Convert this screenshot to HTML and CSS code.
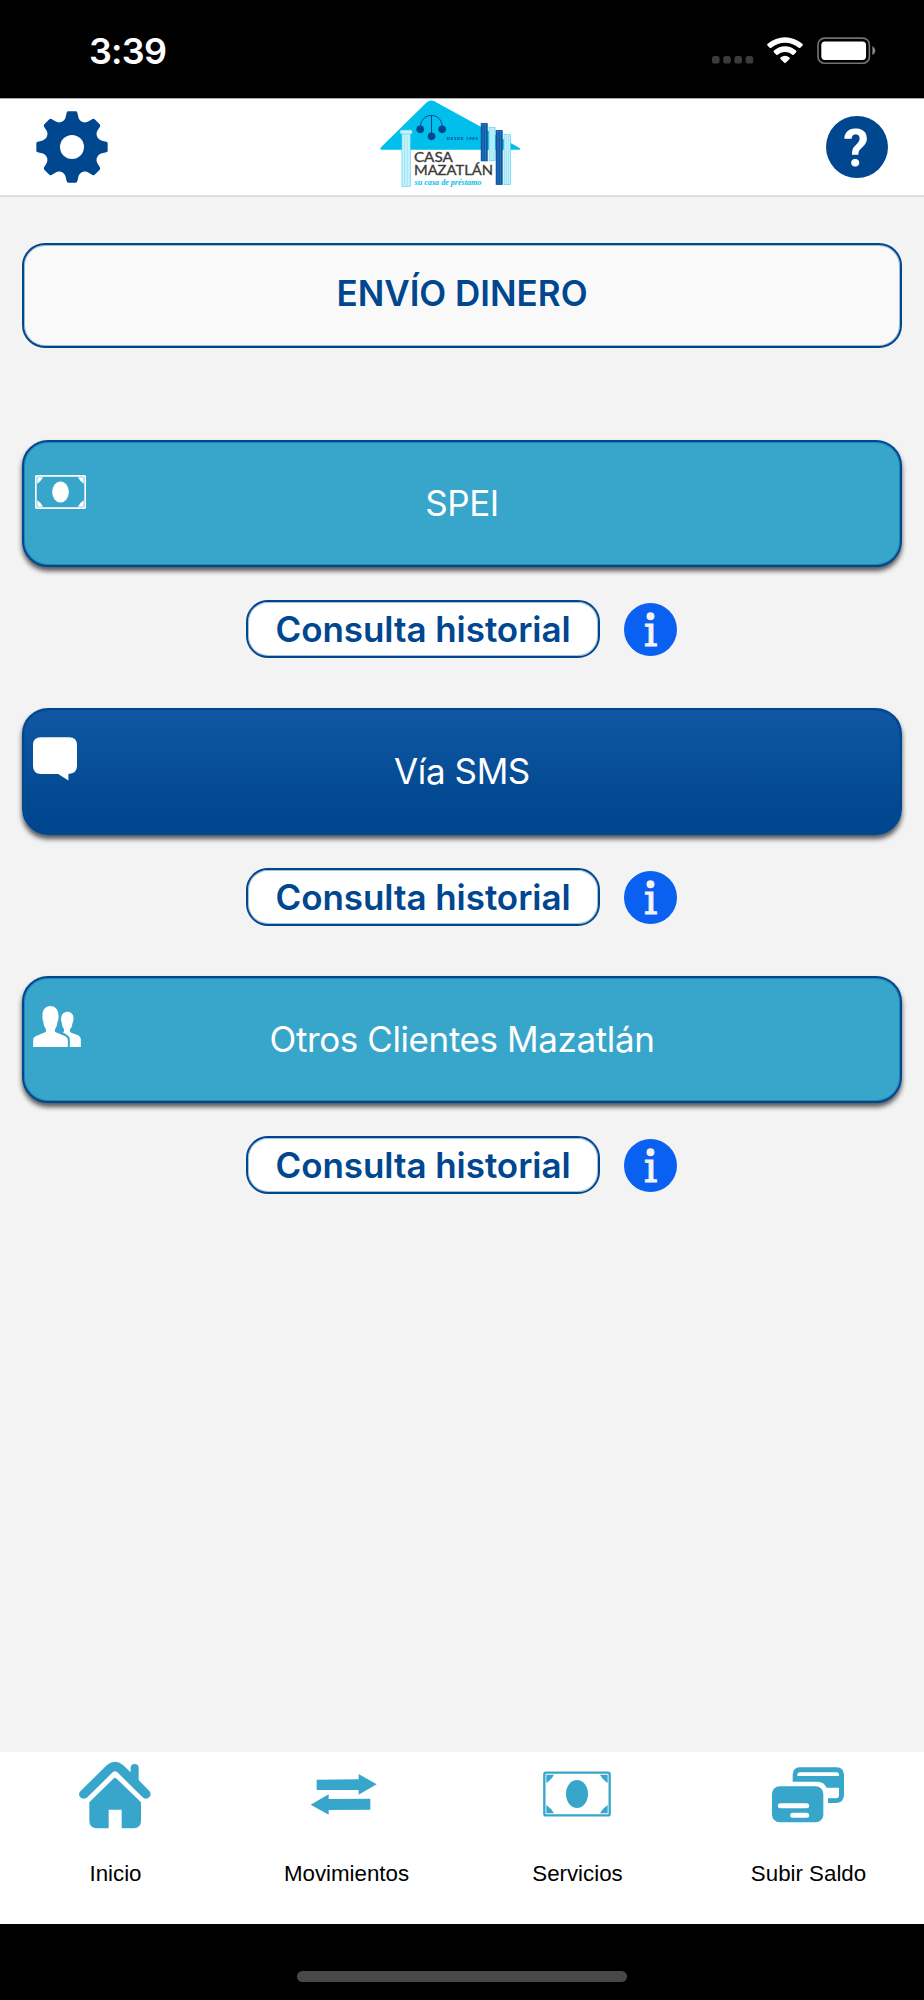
FILE: index.html
```html
<!DOCTYPE html>
<html lang="es">
<head>
  <meta charset="UTF-8" />
  <meta name="viewport" content="width=device-width, initial-scale=1.0" />
  <title>Casa Mazatlán - Envío dinero</title>
  <link rel="stylesheet" href="styles.css">
</head>
<body>
  <div class="status-bar">
    <span class="clock">3:39</span>
    <div class="status-icons">
      <svg class="signal" viewBox="0 0 42 8" fill="#3b3b3b">
        <rect width="7.6" height="7.6" rx="2.6" />
        <rect x="11.2" width="7.6" height="7.6" rx="2.6" />
        <rect x="22.4" width="7.6" height="7.6" rx="2.6" />
        <rect x="33.6" width="7.6" height="7.6" rx="2.6" />
      </svg>
      <svg class="wifi" viewBox="0 0 108 80" fill="#fff">
        <path d="M2 20C32-6 76-6 106 20Q109 23 106 26L100 32Q97 34 94 31C71 12 37 12 14 31Q11 34 8 32L2 26Q-1 23 2 20Z" />
        <path d="M21 40C40 23 68 23 87 40Q90 43 87 46L81 52Q78 55 75 52C63 42 45 42 33 52Q30 55 27 52L21 46Q18 43 21 40Z" />
        <path d="M41 60Q54 51 67 60Q70 63 67 66L56 77Q54 79 52 77L41 66Q38 63 41 60Z" />
      </svg>
      <svg class="battery" viewBox="0 0 178 84">
        <rect x="3" y="3" width="155" height="76" rx="20" fill="none" stroke="#727272" stroke-width="5" />
        <rect x="13" y="13" width="135" height="56" rx="11" fill="#fff" />
        <path d="M167 27Q176 33 176 41T167 55Z" fill="#8a8a8a" />
      </svg>
    </div>
  </div>

  <header class="header">
    <svg class="gear" viewBox="-108 -108 216 216">
      <path fill="#00478f" d="M-19-90L-16-103Q-15-107-11-107H11Q15-107 16-103L19-90C22-76 38-69 50-77L61.5-84Q65-86 68-83L83-68Q86-65 84-61.5L77-50C69-38 76-22 90-19L103-16Q107-15 107-11V11Q107 15 103 16L90 19C76 22 69 38 77 50L84 61.5Q86 65 83 68L68 83Q65 86 61.5 84L50 77C38 69 22 76 19 90L16 103Q15 107 11 107H-11Q-15 107-16 103L-19 90C-22 76-38 69-50 77L-61.5 84Q-65 86-68 83L-83 68Q-86 65-84 61.5L-77 50C-69 38-76 22-90 19L-103 16Q-107 15-107 11V-11Q-107-15-103-16L-90-19C-76-22-69-38-77-50L-84-61.5Q-86-65-83-68L-68-83Q-65-86-61.5-84L-50-77C-38-69-22-76-19-90Z" />
      <circle r="36" fill="#fff" />
    </svg>

    <svg class="logo" viewBox="30 28 424 264">
      <path fill="#00bfea" d="M33 170L170 35Q185 24 200 35L450 172Q455 177 447 177H36Q28 177 33 170Z" />
      <!-- péndulo -->
      <path d="M152 116C146 60 223 60 217 116M185 73V136" fill="none" stroke="#00478f" stroke-width="3" />
      <g fill="#00478f">
        <circle cx="151" cy="116" r="11.5" />
        <circle cx="185" cy="137" r="11.5" />
        <circle cx="217" cy="116" r="11.5" />
      </g>
      <text class="logo-since" x="231" y="148" textLength="94">DESDE 1985</text>
      <!-- columnas -->
      <g stroke="#4fd0f0" stroke-width="2" fill="#c9f1fb">
        <rect x="96" y="128" width="25" height="159" />
        <rect x="90" y="118" width="37" height="12" rx="5" />
        <rect x="358" y="110" width="18" height="100" />
        <rect x="403" y="132" width="19" height="150" />
        <path d="M104 132V284M112 132V284M364 114V208M370 114V208M410 136V280M416 136V280" stroke-width="1" />
      </g>
      <g fill="#0d56a0">
        <rect x="333" y="97" width="21" height="115" />
        <rect x="378" y="118" width="21" height="165" />
      </g>
      <path d="M340 104V210M347 104V210M385 124V281M392 124V281M333 102H354M378 123H399" stroke="#3d8cc8" stroke-width="2" />
      <text class="logo-name" x="132" y="214" textLength="117" lengthAdjust="spacingAndGlyphs">CASA</text>
      <text class="logo-name" x="132" y="254" textLength="238" lengthAdjust="spacingAndGlyphs">MAZATLÁN</text>
      <text class="logo-tag" x="134" y="283" textLength="201" lengthAdjust="spacingAndGlyphs">su casa de préstamo</text>
    </svg>

    <svg class="help" viewBox="0 0 62 62">
      <circle cx="31" cy="31" r="31" fill="#00478f" />
      <text x="30" y="49.5" text-anchor="middle">?</text>
    </svg>
  </header>

  <main class="content">
    <h1 class="title">ENVÍO DINERO</h1>

    <section class="option">
      <button class="option-button">
        <svg class="icon-bill" viewBox="0 0 202 134">
          <rect x="3" y="3" width="196" height="128" rx="5" fill="none" stroke="currentColor" stroke-width="7" />
          <g fill="currentColor">
            <ellipse cx="101" cy="67" rx="33" ry="42" />
            <path d="M9 9H32Q24 24 9 34ZM193 9H170Q178 24 193 34ZM9 125H32Q24 110 9 100ZM193 125H170Q178 110 193 100Z" />
          </g>
        </svg>
        <span>SPEI</span>
      </button>
      <div class="history">
        <button class="history-button">Consulta historial</button>
        <svg class="info" viewBox="0 0 53 53">
          <circle cx="26.5" cy="26.5" r="26.5" fill="#0a60f0" />
          <text x="26.7" y="43" text-anchor="middle">i</text>
          <circle cx="26.5" cy="13.2" r="4" fill="#f3f3f3" />
        </svg>
      </div>
    </section>

    <section class="option">
      <button class="option-button dark">
        <svg class="icon-chat" viewBox="0 0 133 132">
          <path fill="currentColor" d="M24 0H109Q133 0 133 24V87Q133 110 107 111V131L76 111H24Q0 111 0 87V24Q0 0 24 0Z" />
        </svg>
        <span>Vía SMS</span>
      </button>
      <div class="history">
        <button class="history-button">Consulta historial</button>
        <svg class="info" viewBox="0 0 53 53">
          <circle cx="26.5" cy="26.5" r="26.5" fill="#0a60f0" />
          <text x="26.7" y="43" text-anchor="middle">i</text>
          <circle cx="26.5" cy="13.2" r="4" fill="#f3f3f3" />
        </svg>
      </div>
    </section>

    <section class="option">
      <button class="option-button">
        <svg class="icon-users" viewBox="0 0 143 123">
          <g fill="currentColor">
            <path d="M0 123V101Q0 95 7 91L36 79Q40 77 38 69Q31 60 30 46Q27 40 28 28C27-9 76-9 76 28Q77 40 73 48Q72 60 66 69Q63 77 68 79L95 90Q104 94 104 102V123Z" />
            <path d="M110 123V100Q110 91 102 87L89 79Q95 77 92 69Q86 62 86 51Q83 45 84 36C85 11 121 11 121 36Q121 46 118 52Q117 63 111 69Q108 77 114 80L135 88Q143 92 143 100V123Z" />
          </g>
        </svg>
        <span>Otros Clientes Mazatlán</span>
      </button>
      <div class="history">
        <button class="history-button">Consulta historial</button>
        <svg class="info" viewBox="0 0 53 53">
          <circle cx="26.5" cy="26.5" r="26.5" fill="#0a60f0" />
          <text x="26.7" y="43" text-anchor="middle">i</text>
          <circle cx="26.5" cy="13.2" r="4" fill="#f3f3f3" />
        </svg>
      </div>
    </section>
  </main>

  <nav class="tab-bar">
    <a class="tab">
      <svg class="tab-icon" viewBox="0 0 216 216">
        <g fill="#38a6ca">
          <path d="M4 91L84 12Q108-8 132 12L155 34V21A12 12 0 0 1 179 21V57L211 90C223 103 204 121 191 109L115 34Q108 27 101 34L25 109C11 121-8 104 4 91Z" />
          <path d="M31 124L103 53Q108 48 113 53L186 124V179Q186 201 164 202H128V146H89V202H53Q31 201 31 179Z" />
        </g>
      </svg>
      <span>Inicio</span>
    </a>
    <a class="tab">
      <svg class="tab-icon" viewBox="0 0 216 216">
        <path fill="#38a6ca" d="M20 56L146 55V39L200 70L146 101V87H20ZM181 113L56 114V100L2 131L56 161V147L181 146Z" />
      </svg>
      <span>Movimientos</span>
    </a>
    <a class="tab">
      <svg class="tab-icon" viewBox="0 0 216 216">
        <g transform="translate(7 32)">
          <rect x="3" y="3" width="196" height="128" rx="5" fill="none" stroke="#38a6ca" stroke-width="7" />
          <g fill="#38a6ca">
            <ellipse cx="101" cy="67" rx="33" ry="42" />
            <path d="M9 9H32Q24 24 9 34ZM193 9H170Q178 24 193 34ZM9 125H32Q24 110 9 100ZM193 125H170Q178 110 193 100Z" />
          </g>
        </g>
      </svg>
      <span>Servicios</span>
    </a>
    <a class="tab">
      <svg class="tab-icon" viewBox="0 0 216 216">
        <path fill="#38a6ca" d="M62 62V41Q63 20 83 19H194Q215 20 216 41V103Q215 124 194 126H168V112H192Q201 112 201 103V80H164Q156 62 137 62Z" />
        <path d="M76 45V42Q76 34 84 34H194Q201 34 201 42V45Z" fill="#fff" />
        <rect y="76" width="154" height="108" rx="23" fill="#38a6ca" />
        <path d="M25 134H104M62 163H104" stroke="#fff" stroke-width="15" stroke-linecap="round" />
      </svg>
      <span>Subir Saldo</span>
    </a>
  </nav>

  <div class="home-area">
    <div class="home-indicator"></div>
  </div>
</body>
</html>
```

FILE: styles.css
```css
* {
  box-sizing: border-box;
}

body {
  margin: 0;
  width: 924px;
  height: 2000px;
  display: flex;
  flex-direction: column;
  font-family: Inter, "Liberation Sans", sans-serif;
  background: #f3f3f3;
}

svg {
  display: block;
  flex: none;
}

button {
  font-family: inherit;
  margin: 0;
  padding: 0;
}

/* barra de estado */
.status-bar {
  height: 98px;
  flex: none;
  display: flex;
  justify-content: space-between;
  padding: 29px 48px 0 89px;
  background: #000;
  color: #fff;
}

.clock {
  font-size: 36px;
  line-height: 44px;
  font-weight: 600;
  letter-spacing: -0.8px;
}

.status-icons {
  display: flex;
  align-items: flex-start;
  padding-top: 8px;
}

.signal {
  width: 42px;
  height: 8px;
  margin: 19px 13px 0 0;
}

.wifi {
  width: 36px;
  height: 27px;
  margin-right: 14px;
}

.battery {
  width: 59px;
  height: 28px;
}

.header {
  height: 99px;
  flex: none;
  display: flex;
  align-items: center;
  padding: 0 36px;
  background: #fff;
  border-top: 1px solid #aaa;
  border-bottom: 2px solid #dedede;
}

.gear {
  width: 72px;
  height: 72px;
  margin-left: -0.5px;
}

.logo {
  width: 141px;
  height: 88px;
  margin: 0 305px 6px 272.5px;
}

.logo-since {
  font: 700 13px Lato, sans-serif;
  fill: #00478f;
}

.logo-name {
  font: 400 40px Lato, sans-serif;
  fill: #3c3c3c;
  stroke: #3c3c3c;
  stroke-width: 1px;
}

.logo-tag {
  font: italic 700 25px "Liberation Serif", serif;
  fill: #00bfea;
}

.help {
  width: 62px;
  height: 62px;
}

.help text {
  font: 700 51px Roboto, sans-serif;
  fill: #fff;
}

/* contenido */
.content {
  flex: 1;
  padding: 46px 22px 0;
}

.title {
  height: 105px;
  margin: 0 0 92px;
  border: 2px solid #00478f;
  border-radius: 23px;
  background: #f9f9f9;
  box-shadow: inset 0 0 0 1px rgba(0, 71, 143, 0.35);
  color: #00478f;
  text-align: center;
  font-size: 35px;
  line-height: 97px;
  font-weight: 600;
}

.option {
  height: 268px;
}

.option-button {
  width: 100%;
  height: 127px;
  display: grid;
  grid-template-columns: 60px 1fr 60px;
  align-items: start;
  border: 2px solid #00478f;
  border-radius: 26px;
  background: #38a6ca;
  box-shadow: 0 4px 5px rgba(0, 0, 0, 0.65), inset 0 0 0 1px rgba(0, 71, 143, 0.35);
  color: #fff;
  font-size: 35px;
  line-height: 123px;
  letter-spacing: -0.4px;
}

.option-button.dark {
  background: linear-gradient(#1058a3, #00478f 85%);
}

.icon-bill {
  width: 51px;
  height: 34px;
  margin: 33px 0 0 11px;
}

.icon-chat {
  width: 44px;
  height: 44px;
  margin: 27px 0 0 9px;
}

.icon-users {
  width: 48px;
  height: 41px;
  margin: 28px 0 0 9px;
}

.history {
  display: flex;
  align-items: center;
  padding: 33px 0 0 224px;
  gap: 24px;
}

.history-button {
  width: 354px;
  height: 58px;
  border: 2px solid #00478f;
  border-radius: 22px;
  background: #fff;
  box-shadow: inset 0 0 0 1px rgba(0, 71, 143, 0.35);
  color: #00478f;
  font-size: 35px;
  font-weight: 600;
  letter-spacing: -0.05px;
  white-space: nowrap;
}

.info {
  width: 53px;
  height: 53px;
}

.info text {
  font: 43px "DejaVu Serif", serif;
  fill: #f3f3f3;
  stroke: #f3f3f3;
  stroke-width: 0.8px;
}

/* menú inferior */
.tab-bar {
  height: 172px;
  flex: none;
  display: grid;
  grid-template-columns: repeat(4, 1fr);
  background: #fff;
}

.tab {
  display: flex;
  flex-direction: column;
  align-items: center;
  padding-top: 9px;
  font-family: "Liberation Sans", Arial, sans-serif;
  font-size: 22.3px;
  line-height: 26px;
  color: #000;
}

.tab-icon {
  width: 72px;
  height: 72px;
  margin: 0 1px 28px 0;
}

.home-area {
  height: 76px;
  flex: none;
  padding-top: 47px;
  background: #000;
}

.home-indicator {
  width: 330px;
  height: 11px;
  margin: 0 auto;
  border-radius: 6px;
  background: #484848;
}
```
